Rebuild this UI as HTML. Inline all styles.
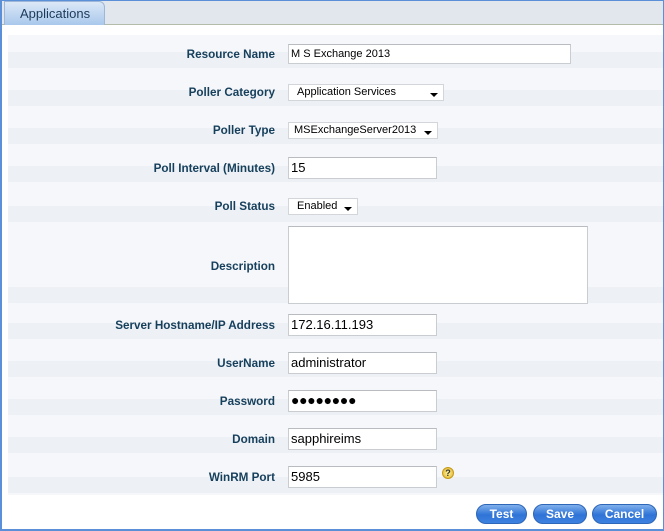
<!DOCTYPE html>
<html><head><style>
*{margin:0;padding:0;box-sizing:border-box}
body{width:664px;height:531px;overflow:hidden;background:#fff;font-family:"Liberation Sans",Arial,sans-serif;position:relative}
.frame{position:absolute;left:0;top:0;width:664px;height:531px;border:2px solid #5b90d8;border-top:1px solid #5b90d8;border-right:1px solid #5b90d8}
.hdr{position:absolute;left:2px;top:1px;width:661px;height:24px;background:#e2e7ee;border-bottom:1px solid #b3bca8}
.tab{position:absolute;left:4px;top:1px;width:101px;height:24px;border:1px solid #9fb7d6;border-bottom:none;border-radius:0 6px 0 0;background:linear-gradient(#dbe8f7,#a9c8ec);font-size:13px;color:#1b3a5a;padding:4px 0 0 15px}
.panel{position:absolute;left:8px;top:35px;width:655px;height:460px;background:#f5f7fa}
.band{position:absolute;left:8px;width:655px;height:16px;background:#edf1f5}
.lbl{position:absolute;right:389px;font-size:11.7px;font-weight:bold;color:#163f5c;white-space:nowrap}
.in{position:absolute;left:288px;height:22px;width:149px;background:#fff;border:1px solid #c9ccd0;border-top-color:#b8bbbf;font-size:13px;padding:2px 0 0 2px;color:#000}
.sel{position:absolute;left:288px;height:17px;background:#fff;border:1px solid #d2d5d9;font-size:11px;padding:1px 0 0 8px;color:#000}
.sel:after{content:"";position:absolute;right:5px;top:8px;border-left:4px solid transparent;border-right:4px solid transparent;border-top:4px solid #000}
.btn{position:absolute;top:504px;height:20px;border-radius:10px;border:1px solid #2e66b8;background:linear-gradient(#7fb0ec,#2f73d6 55%,#3d82e0);color:#fff;font-size:12px;font-weight:bold;text-align:center;line-height:18px}
</style></head><body>
<div class="hdr"></div>
<div class="tab">Applications</div>
<div class="panel"></div>
<div class="band" style="top:52px"></div>
<div class="band" style="top:90px"></div>
<div class="band" style="top:128px"></div>
<div class="band" style="top:166px"></div>
<div class="band" style="top:206px"></div>
<div class="band" style="top:287px"></div>
<div class="band" style="top:323px"></div>
<div class="band" style="top:361px"></div>
<div class="band" style="top:399px"></div>
<div class="band" style="top:437px"></div>
<div class="band" style="top:477px"></div>

<div class="lbl" style="top:48px">Resource Name</div>
<div class="in" style="top:44px;width:283px;height:20px;font-size:11px;padding-top:3px">M S Exchange 2013</div>
<div class="lbl" style="top:86px">Poller Category</div>
<div class="sel" style="top:84px;width:156px">Application Services</div>
<div class="lbl" style="top:124px">Poller Type</div>
<div class="sel" style="top:122px;width:150px;padding-left:5px">MSExchangeServer2013</div>
<div class="lbl" style="top:162px">Poll Interval (Minutes)</div>
<div class="in" style="top:157px">15</div>
<div class="lbl" style="top:200px">Poll Status</div>
<div class="sel" style="top:198px;width:70px">Enabled</div>
<div class="lbl" style="top:260px">Description</div>
<div class="in" style="top:226px;width:300px;height:78px"></div>
<div class="lbl" style="top:319px">Server Hostname/IP Address</div>
<div class="in" style="top:314px">172.16.11.193</div>
<div class="lbl" style="top:357px">UserName</div>
<div class="in" style="top:352px">administrator</div>
<div class="lbl" style="top:395px">Password</div>
<div class="in" style="top:390px;font-size:14px;letter-spacing:-0.3px;padding-top:1px">●●●●●●●●</div>
<div class="lbl" style="top:433px">Domain</div>
<div class="in" style="top:428px">sapphireims</div>
<div class="lbl" style="top:471px">WinRM Port</div>
<div class="in" style="top:466px">5985</div>
<div style="position:absolute;left:442px;top:467px;width:12px;height:12px;border-radius:50%;background:radial-gradient(#fff3a0,#e0b020);border:1px solid #c69a1a;font-size:9px;font-weight:bold;text-align:center;line-height:10px;color:#333">?</div>

<div class="btn" style="left:476px;width:51px">Test</div>
<div class="btn" style="left:533px;width:54px">Save</div>
<div class="btn" style="left:592px;width:65px">Cancel</div>
<div class="frame"></div>
</body></html>
